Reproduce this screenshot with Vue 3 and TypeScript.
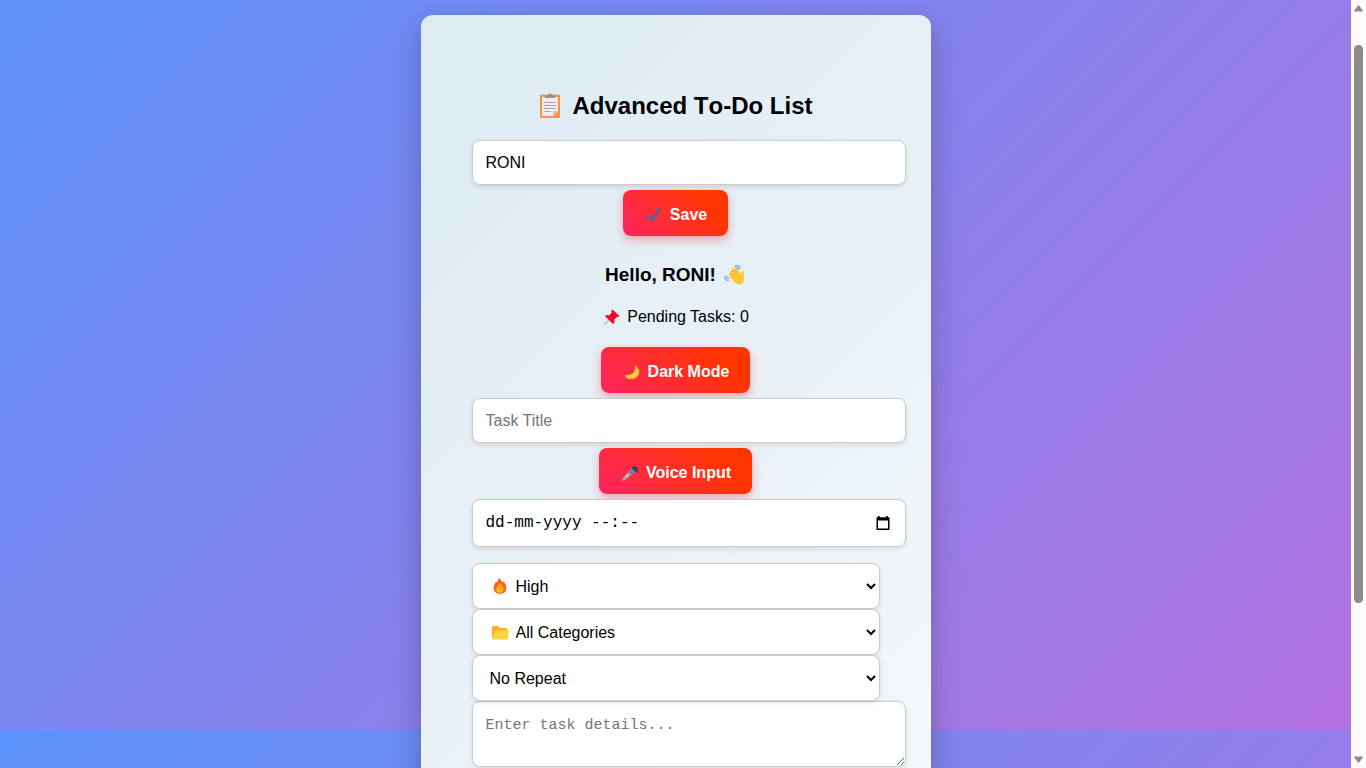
<script setup lang="ts">
import { ref } from 'vue'

const name = ref('RONI')
const title = ref('')
const due = ref('dd-mm-yyyy --:--')
const priority = ref('High')
const category = ref('All Categories')
const repeat = ref('No Repeat')
const details = ref('')
const pending = ref(0)
</script>

<template>
  <div class="page">
    <main class="backdrop">
      <section class="card">
        <h1 class="title">
          <svg class="icon-title" viewBox="0 0 24 26" aria-hidden="true">
            <rect x="2" y="1.500" width="20" height="23.500" rx="1.500" fill="#f79443" />
            <path d="M4 4h16v14l-5 5H4z" fill="#f1ebf6" />
            <path d="M15 23v-5h5z" fill="#c9bfd3" />
            <path d="M7 5V2.500h3a2 2 0 0 1 4 0h3V5z" fill="#998f94" />
            <path d="M6 9.500h12M6 12.500h12M6 15.500h12M6 18.500h7" stroke="#aaa5b2" stroke-width="1.200" />
          </svg>
          <span>Advanced To-Do List</span>
        </h1>

        <input v-model="name" class="field" type="text" aria-label="Name" />
        <button class="btn" type="button">
          <svg class="icon" viewBox="0 0 20 20" aria-hidden="true">
            <path d="M4 11.500l4 3.500 7-10.500" fill="none" stroke="#665d96" stroke-width="3.200" stroke-linecap="round" stroke-linejoin="round" />
          </svg>
          <span>Save</span>
        </button>

        <h2 class="hello">
          <span>Hello, {{ name }}!</span>
          <svg class="icon-wave" viewBox="0 0 22 22" aria-hidden="true">
            <path d="M6 8c0-1.500 1.800-2 2.700-.7L7.800 5.500c-.5-1.500 1.500-2.300 2.300-1l.7 1c.3-1.500 2.100-1.500 2.700-.2l2.800 4.900 1-2.400c.6-1.500 2.500-.8 2.300.8l.6 6.900c.1 4-3.700 5.700-6.900 4.600-2.600-.8-3.900-2.700-5.300-4.600l-3.200-4.200c-.8-1.100.3-2.500 1.600-1.600z" fill="#ffc936" />
            <path d="M7 9l4 4.500M8.700 7.200l4 4.500M11 5.800l3.500 4.400M16.300 10.200c-2 1.500-1.700 3-.9 4" fill="none" stroke="#f5a927" stroke-width=".7" stroke-linecap="round" />
            <path d="M11 2.500c2-1.500 4-.8 5.200 1.500M12 4c1.400-.6 2.200 0 3 1.500M1 12c-.6 2.500.6 4.200 3.200 4.700M3 12c-.2 1.600.6 2.300 2 2.700" fill="none" stroke="#65a7ef" stroke-width="1.200" stroke-linecap="round" />
          </svg>
        </h2>

        <p class="pending">
          <svg class="icon" viewBox="0 0 20 20" aria-hidden="true">
            <path d="M8 12l-5.500 5.500" stroke="#bfc0c8" stroke-width="1.500" stroke-linecap="round" />
            <path d="M10.500 2.500l7 6.500-1.200 1.300-1.900-.2-2.200 2.400.2 3.200-1.400 1.200L3 9.300l1.200-1.300 3.400.2 2-2.200-.3-2.300z" fill="#f70a23" />
            <path d="M9.600 6l5 4.300-2.400 2.200-4.600-4.300z" fill="#d9093a" />
          </svg>
          <span>Pending Tasks: {{ pending }}</span>
        </p>

        <button class="btn btn-follow" type="button">
          <svg class="icon" viewBox="0 0 20 20" aria-hidden="true">
            <path d="M12.500 3c7.500 3.600 5.200 14.300-3 14.300-3.600 0-6-1.500-7-4.600 8 1.700 12.100-3.800 10-9.700z" fill="#ffc83d" />
            <path d="M16.500 7c1.900 5.200-2.500 10.500-8.400 9.500" fill="none" stroke="#f5a337" stroke-width="1" />
          </svg>
          <span>Dark Mode</span>
        </button>
        <input v-model="title" class="field" type="text" placeholder="Task Title" aria-label="Task Title" />
        <button class="btn" type="button">
          <svg class="icon" viewBox="0 0 20 20" aria-hidden="true">
            <path d="M10.500 7l3 3-9 7.500c-1.700.8-3-.5-2.200-2z" fill="#a7a0ad" />
            <path d="M11.500 7l2.500 2.500-2.500 2-3-2z" fill="#77737f" />
            <path d="M8 12l-2 2" stroke="#e8e3eb" stroke-width="1.300" />
            <path d="M10.700 5.500c1.200-2.800 4.500-3.400 6.400-1.300s1.100 5.300-1.700 6.300z" fill="#493c5c" />
            <path d="M10.500 5.300l5.200 5.200" stroke="#8886ac" stroke-width="1.500" />
          </svg>
          <span>Voice Input</span>
        </button>

        <div class="date-row">
          <input v-model="due" class="field date" type="text" aria-label="Due date and time" />
          <button class="picker" type="button" aria-label="Open calendar">
            <svg viewBox="0 0 14 14" aria-hidden="true">
              <path d="M.5 1.200H2V0h1.700v1.200h6.600V0H12v1.200h1.500V14H.5zM2 4.500v8h10v-8z" fill="#000" fill-rule="evenodd" />
            </svg>
          </button>
        </div>

        <div class="select-row">
          <select v-model="priority" class="select with-icon" aria-label="Priority">
            <option>High</option>
            <option>Medium</option>
            <option>Low</option>
          </select>
          <svg class="select-icon" viewBox="0 0 20 20" aria-hidden="true">
            <path d="M10 2c.3 2.200 1.500 3.200 2.600 4.200.3-.3.400-.8.400-1.200 2.200 2 3.400 4.200 3.400 6.800 0 3.700-2.700 6.200-6.400 6.200s-6.400-2.500-6.400-6.200C3.600 9 4.700 7 6.400 5.400c.1.600.3 1 .6 1.300C7.300 4.700 8.400 3.100 10 2z" fill="#ff6216" />
            <path d="M10.200 7c.4 1.700 1.600 2.200 2.500 3.400 2 2.800.7 6.600-2.700 6.600-3.300 0-4.900-3.300-3.200-6.100l.9.900C7.900 9.700 8.700 8 10.200 7z" fill="#ffae22" />
          </svg>
        </div>
        <div class="select-row">
          <select v-model="category" class="select with-icon" aria-label="Category">
            <option>All Categories</option>
            <option>Work</option>
            <option>Personal</option>
          </select>
          <svg class="select-icon" viewBox="0 0 20 20" aria-hidden="true">
            <path d="M2 5.500C2 4.700 2.700 4 3.500 4H8l2 2h6c.8 0 1.500.7 1.500 1.500V16H2z" fill="#ffb02e" />
            <path d="M5.500 9.500c.2-.7.700-1 1.400-1h10.600c1 0 1.600.7 1.400 1.600l-1.300 6.200c-.1.800-.7 1.200-1.500 1.200H3.500c-1 0-1.600-.8-1.400-1.600z" fill="#ffd340" />
          </svg>
        </div>
        <div class="select-row">
          <select v-model="repeat" class="select" aria-label="Repeat">
            <option>No Repeat</option>
            <option>Daily</option>
            <option>Weekly</option>
          </select>
        </div>
        <textarea v-model="details" class="field details" placeholder="Enter task details..." aria-label="Task details"></textarea>
      </section>
    </main>

    <div class="scrollbar" aria-hidden="true">
      <svg class="arrow" viewBox="0 0 15 17"><path d="M7.500 5.500L11.500 11H3.500z" fill="#8b8b8b" stroke="#8b8b8b" stroke-linejoin="round" /></svg>
      <div class="track"><div class="thumb"></div></div>
      <svg class="arrow" viewBox="0 0 15 17"><path d="M7.500 11.500L3.500 6h8z" fill="#8b8b8b" stroke="#8b8b8b" stroke-linejoin="round" /></svg>
    </div>
  </div>
</template>

<style>
body {
  margin: 0;
}
</style>

<style scoped>
.page {
  display: flex;
  height: 100vh;
  overflow: hidden;
  font-family: "Liberation Sans", Arial, sans-serif;
  font-size: 16px;
  color: #000;
}

.backdrop {
  flex: 1;
  display: flex;
  justify-content: center;
  align-items: flex-start;
  padding-top: 15px;
  background-image: linear-gradient(135deg, #5c93fc, #b272df);
  background-size: 100% 100vh;
  background-position: 0 -38px;
}

.card {
  box-sizing: border-box;
  width: 100%;
  max-width: 510px;
  padding: 76px 50px 188px;
  display: flex;
  flex-direction: column;
  align-items: center;
  border: 1px solid rgba(255, 255, 255, 0.2);
  border-radius: 12px;
  background: linear-gradient(135deg, #dceaf2, #f7f9fb) border-box;
  box-shadow: 0 10px 30px rgba(0, 0, 0, 0.25);
}

.title {
  display: flex;
  align-items: center;
  gap: 10px;
  margin: 0 0 20px;
  font-size: 24px;
  font-kerning: none;
  line-height: 28px;
}

.icon-title {
  width: 24px;
  height: 26px;
}

.field {
  box-sizing: border-box;
  align-self: flex-start;
  width: calc(100% + 26px);
  height: 45px;
  padding: 12px 13px;
  border: 1px solid #ccc;
  border-radius: 8px;
  background: #fff;
  box-shadow: 0 2px 5px rgba(0, 0, 0, 0.1);
  color: #000;
  font-family: inherit;
  font-size: 16px;
  outline: none;
}

.field::placeholder {
  color: #757575;
}

.btn {
  display: flex;
  align-items: center;
  gap: 6px;
  height: 46px;
  margin: 5px 0;
  padding: 3px 21px 0;
  border: 0;
  border-radius: 8px;
  background: linear-gradient(45deg, #ff2460, #ff3500 80%);
  box-shadow: 0 4px 10px rgba(255, 50, 60, 0.4);
  color: #fff;
  font-family: inherit;
  font-size: 16px;
  font-weight: bold;
}

.icon {
  width: 20px;
  height: 20px;
}

.hello {
  display: flex;
  align-items: center;
  gap: 8px;
  margin: 23px 0 21px;
  font-size: 19px;
  line-height: 22px;
}

.icon-wave {
  width: 22px;
  height: 22px;
}

.pending {
  display: flex;
  align-items: center;
  gap: 5px;
  margin: 0;
  line-height: 20px;
}

.btn-follow {
  margin-top: 20px;
}

.date-row {
  position: relative;
  align-self: stretch;
  display: flex;
  margin-bottom: 16px;
}

.date {
  flex: none;
  height: 48px;
  font-family: "Liberation Mono", monospace;
  font-size: 16px;
}

.picker {
  position: absolute;
  top: 17px;
  right: -10px;
  width: 14px;
  height: 14px;
  padding: 0;
  border: 0;
  background: none;
}

.picker svg {
  display: block;
  width: 14px;
  height: 14px;
}

.select-row {
  position: relative;
  align-self: stretch;
  display: flex;
}

.select {
  width: 100%;
  height: 46px;
  padding: 12px 0 12px 13px;
  border: 1px solid #ccc;
  border-radius: 8px;
  background-color: #fff;
  box-shadow: 0 2px 5px rgba(0, 0, 0, 0.1);
  color: #000;
  font-family: inherit;
  font-size: 16px;
  outline: none;
}

.with-icon {
  padding-left: 39px;
}

.select-icon {
  position: absolute;
  top: 13px;
  left: 18px;
  width: 20px;
  height: 20px;
  pointer-events: none;
}

.details {
  height: 66px;
  padding-top: 15px;
  font-family: "Liberation Mono", monospace;
  font-size: 15px;
}

.scrollbar {
  display: flex;
  flex-direction: column;
  width: 15px;
  background: #fcfcfc;
}

.arrow {
  width: 15px;
  height: 17px;
}

.track {
  flex: 1;
  display: flex;
  justify-content: center;
  align-items: flex-start;
  padding-top: 28px;
}

.thumb {
  width: 9px;
  height: 79%;
  border-radius: 5px;
  background: #8b8b8b;
}
</style>
